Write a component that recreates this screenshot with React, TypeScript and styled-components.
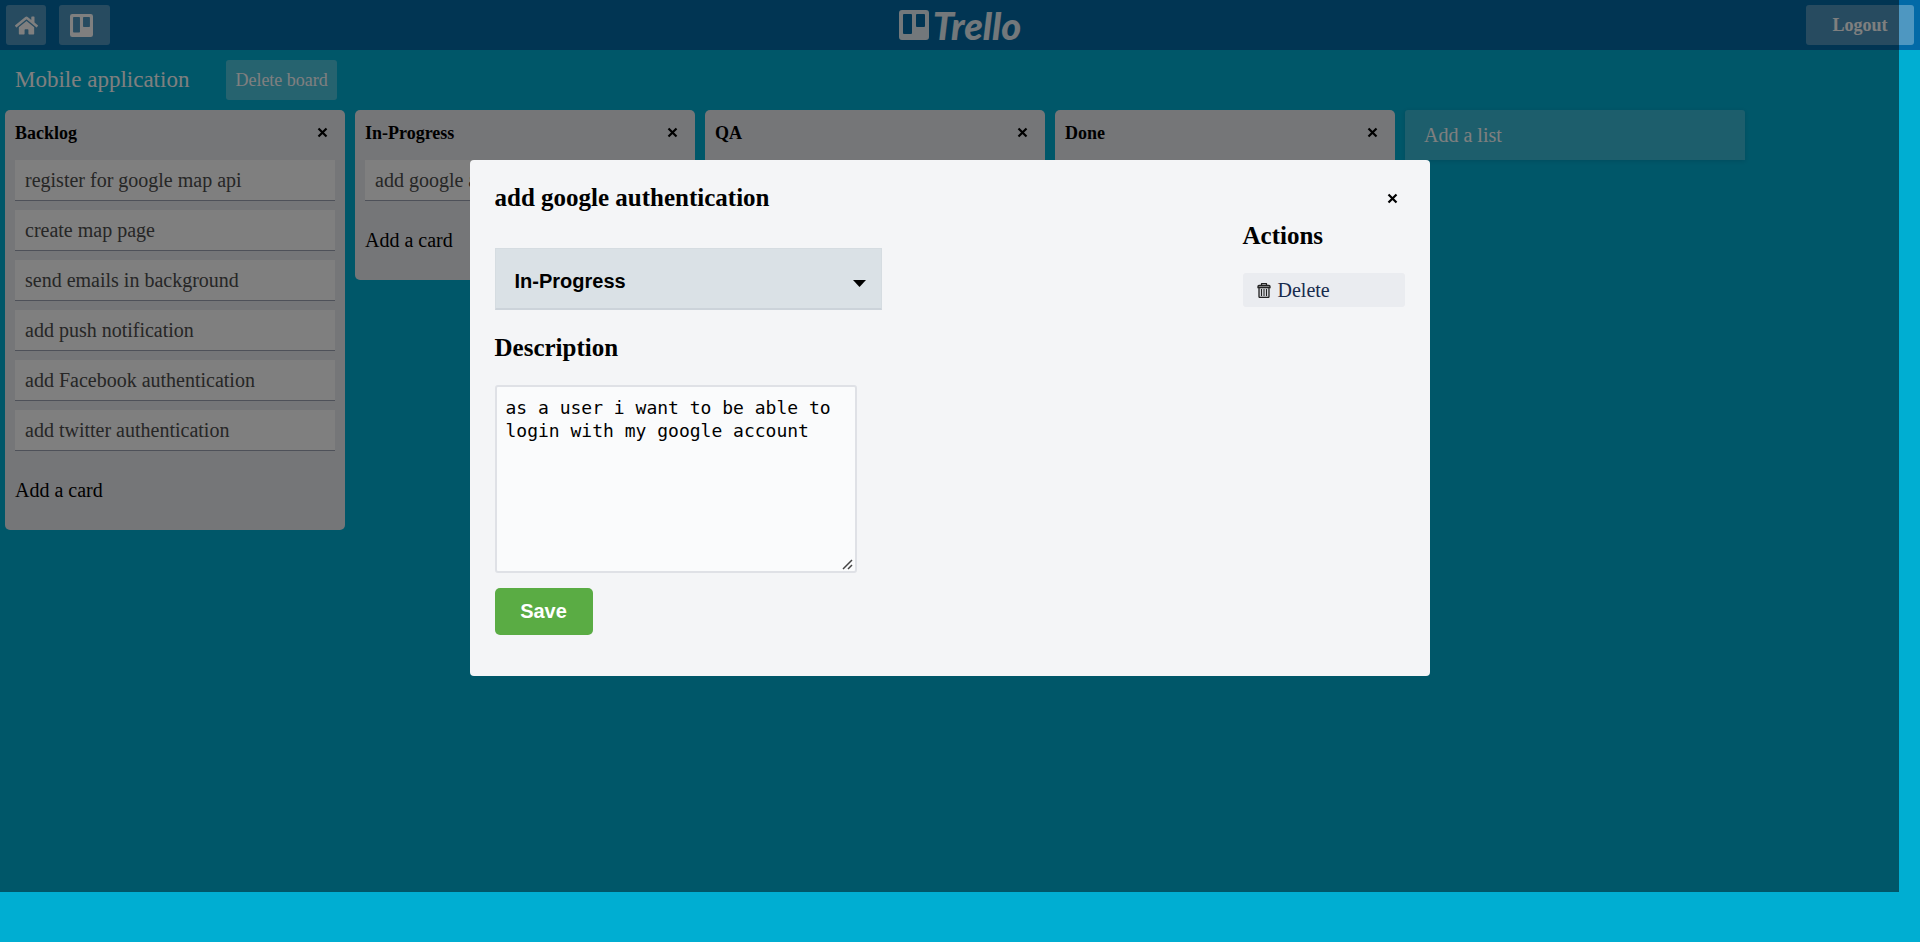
import React from "react";
import styled, { createGlobalStyle } from "styled-components";
import { FaHome } from "react-icons/fa";

const serif = '"Liberation Serif", "Times New Roman", serif';
const sans = '"Liberation Sans", Arial, sans-serif';

const GlobalStyle = createGlobalStyle`
  *, *::before, *::after { box-sizing: border-box; }
  body {
    margin: 0;
    background: #00aed2;
    font-family: ${serif};
    font-size: 20px;
    line-height: 24px;
  }
  button, select, textarea { font: inherit; margin: 0; }
  h1, h2 { margin: 0; }
`;

const Header = styled.header`
  display: grid;
  grid-template-columns: 1fr auto 1fr;
  align-items: center;
  height: 50px;
  padding: 0 6px;
  background: #026aa7;
`;

const NavGroup = styled.nav`
  display: flex;
  gap: 13px;
`;

const HeaderButton = styled.button<{ $width: number }>`
  display: flex;
  align-items: center;
  justify-content: center;
  width: ${(p) => p.$width}px;
  height: 40px;
  padding: 0;
  border: 0;
  border-radius: 3px;
  background: rgba(255, 255, 255, 0.3);
  color: #fff;
  font-size: 18px;
  font-weight: 700;
`;

const BoardsButton = styled(HeaderButton)`
  justify-content: flex-start;
  padding-left: 11px;
`;

const LogoutButton = styled(HeaderButton)`
  justify-self: end;
`;

const Logo = styled.a`
  display: flex;
  align-items: center;
  gap: 4px;
  color: #fff;
  opacity: 0.9;
  text-decoration: none;
  font: italic 900 38px/40px Lato, ${sans};
`;

const BoardBar = styled.div`
  display: flex;
  align-items: center;
  gap: 37px;
  height: 60px;
  padding: 0 15px;
  color: #fff;
`;

const BoardName = styled.h1`
  font-size: 23px;
  font-weight: 400;
`;

const DeleteBoard = styled.button`
  height: 40px;
  padding: 0 9px;
  border: 0;
  border-radius: 3px;
  background: rgba(255, 255, 255, 0.3);
  color: #fff;
  font-size: 18px;
`;

const Lists = styled.main`
  display: flex;
  align-items: flex-start;
  gap: 10px;
  padding: 0 5px;
`;

const List = styled.section`
  flex: 0 0 340px;
  padding: 0 10px 28px;
  border-radius: 5px;
  background: #ebecf0;
`;

const ListHeader = styled.header`
  display: flex;
  align-items: center;
  justify-content: space-between;
  height: 50px;
  padding: 0 7px 5px 0;
`;

const ListName = styled.h2`
  font-size: 18px;
`;

const CloseButton = styled.button`
  display: flex;
  padding: 0;
  border: 0;
  background: none;
  color: #000;
`;

const Cards = styled.ul`
  display: flex;
  flex-direction: column;
  gap: 10px;
  margin: 0;
  padding: 0;
  list-style: none;
`;

const Card = styled.li`
  height: 40px;
  padding: 8px 10px;
  background: #fff;
  box-shadow: 0 1px 0 rgba(9, 30, 66, 0.35);
  color: #4d4d4d;
`;

const AddCard = styled.button`
  display: block;
  margin-top: 28px;
  padding: 0;
  border: 0;
  background: none;
  color: #000;
`;

const AddList = styled.button`
  flex: 0 0 340px;
  height: 50px;
  padding: 0 19px;
  border: 0;
  border-radius: 3px 3px 0 0;
  background: rgba(235, 236, 240, 0.25);
  box-shadow: 0 1px 4px rgba(9, 30, 66, 0.15);
  color: #fff;
  text-align: left;
`;

const Overlay = styled.div`
  position: fixed;
  inset: 0 21px 50px 0;
  display: flex;
  justify-content: center;
  align-items: flex-start;
  padding-top: 160px;
  background: rgba(0, 0, 0, 0.5);
`;

const Dialog = styled.div`
  width: 960px;
  max-width: 100%;
  padding: 24px 25px 41px;
  border-radius: 4px;
  background: #f4f5f7;
`;

const DialogHeader = styled.header`
  display: flex;
  align-items: center;
  justify-content: space-between;
  padding-right: 7px;
`;

const Heading = styled.h2`
  font-size: 25px;
  line-height: 28px;
`;

const DialogBody = styled.div`
  display: flex;
  justify-content: space-between;
  align-items: flex-start;
`;

const Form = styled.form`
  display: flex;
  flex-direction: column;
  align-items: flex-start;
  padding-top: 36px;
`;

const SelectWrap = styled.div`
  display: grid;
  align-items: center;
  width: 387px;
  margin-bottom: 24px;

  > * { grid-area: 1 / 1; }
  > svg { justify-self: end; margin: 8px 16px 0 0; pointer-events: none; }
`;

const StatusSelect = styled.select`
  appearance: none;
  width: 100%;
  height: 62px;
  padding: 4px 19px 0;
  border: 1px solid #d5dce1;
  border-bottom: 2px solid #ccd3da;
  border-radius: 0;
  background: #dae1e6;
  color: #000;
  font: 700 20px/24px ${sans};
`;

const DescriptionWrap = styled.div`
  display: grid;
  margin: 23px 0 15px;

  > * { grid-area: 1 / 1; }
  > svg { place-self: end; margin: 0 4px 3px 0; pointer-events: none; }
`;

const Description = styled.textarea`
  width: 362px;
  height: 188px;
  padding: 9px;
  border: 2px solid #dfe1e6;
  border-radius: 3px;
  background: #fafbfc;
  color: #000;
  font: 18px/23px "DejaVu Sans Mono", monospace;
  resize: none;
`;

const SaveButton = styled.button`
  width: 98px;
  height: 47px;
  padding: 0 0 2px;
  border: 0;
  border-radius: 5px;
  background: #5aac44;
  color: #fff;
  font: 700 20px/24px ${sans};
`;

const Actions = styled.aside`
  width: 162px;
  padding-top: 10px;
`;

const DeleteButton = styled.button`
  display: flex;
  align-items: center;
  gap: 7px;
  width: 100%;
  height: 34px;
  margin-top: 23px;
  padding: 0 14px;
  border: 0;
  border-radius: 3px;
  background: rgba(9, 30, 66, 0.04);
  color: #172b4d;
`;

const BoardMark = ({ size }: { size: number }) => (
  <svg width={size} height={size} viewBox="0 0 30 30" aria-hidden="true">
    <path
      fill="currentColor"
      fillRule="evenodd"
      d="M3 0h24a3 3 0 0 1 3 3v24a3 3 0 0 1-3 3H3a3 3 0 0 1-3-3V3a3 3 0 0 1 3-3ZM5 4A1 1 0 0 0 4 5v18A1 1 0 0 0 5 24h7a1 1 0 0 0 1-1V5A1 1 0 0 0 12 4ZM18 4a1 1 0 0 0-1 1v11A1 1 0 0 0 18 17h7a1 1 0 0 0 1-1V5A1 1 0 0 0 25 4Z"
    />
  </svg>
);

const Cross = () => (
  <svg width="11" height="11" viewBox="0 0 11 11" aria-hidden="true">
    <path d="M1.500 1.500l8 8M9.500 1.500l-8 8" stroke="currentColor" strokeWidth="2.200" />
  </svg>
);

const Caret = () => (
  <svg width="13" height="7" viewBox="0 0 13 7" aria-hidden="true">
    <path d="M0 0h13L6.500 7z" />
  </svg>
);

const Grip = () => (
  <svg width="11" height="11" viewBox="0 0 11 11" aria-hidden="true">
    <path d="M1 10l9-9M6 10l4-4" stroke="#444" strokeWidth="1.500" />
  </svg>
);

const Bin = () => (
  <svg width="14" height="15" viewBox="0 0 14 15" fill="none" stroke="#222" aria-hidden="true">
    <path d="M4.500 2.500v-1.500q0-.5.5-.5h4q.5 0 .5.500v1.500" strokeWidth="1.300" />
    <path
      d="M2 4.500v9q0 1 1 1h8q1 0 1-1v-9M1 4.500v-1q0-1 1-1h10q1 0 1 1v1z"
      fill="#d0d2d6"
      strokeWidth="1.300"
    />
    <path d="M4.500 6v7M7 6v7M9.500 6v7" />
  </svg>
);

const lists = [
  {
    name: "Backlog",
    cards: [
      "register for google map api",
      "create map page",
      "send emails in background",
      "add push notification",
      "add Facebook authentication",
      "add twitter authentication",
    ],
  },
  { name: "In-Progress", cards: ["add google authentication"] },
  { name: "QA", cards: [] },
  { name: "Done", cards: [] },
];

export default function App() {
  return (
    <>
      <GlobalStyle />
      <Header>
        <NavGroup>
          <HeaderButton $width={40} aria-label="Home">
            <FaHome size={23} />
          </HeaderButton>
          <BoardsButton $width={51} aria-label="Boards">
            <BoardMark size={23} />
          </BoardsButton>
        </NavGroup>
        <Logo href="#">
          <BoardMark size={30} />
          Trello
        </Logo>
        <LogoutButton $width={108}>Logout</LogoutButton>
      </Header>
      <BoardBar>
        <BoardName>Mobile application</BoardName>
        <DeleteBoard>Delete board</DeleteBoard>
      </BoardBar>
      <Lists>
        {lists.map((list) => (
          <List key={list.name}>
            <ListHeader>
              <ListName>{list.name}</ListName>
              <CloseButton aria-label={`Delete ${list.name}`}>
                <Cross />
              </CloseButton>
            </ListHeader>
            <Cards>
              {list.cards.map((card) => (
                <Card key={card}>{card}</Card>
              ))}
            </Cards>
            <AddCard>Add a card</AddCard>
          </List>
        ))}
        <AddList>Add a list</AddList>
      </Lists>
      <Overlay>
        <Dialog role="dialog" aria-modal="true" aria-labelledby="card-title">
          <DialogHeader>
            <Heading id="card-title">add google authentication</Heading>
            <CloseButton aria-label="Close">
              <Cross />
            </CloseButton>
          </DialogHeader>
          <DialogBody>
            <Form onSubmit={(e) => e.preventDefault()}>
              <SelectWrap>
                <StatusSelect aria-label="List" defaultValue="In-Progress">
                  {lists.map((list) => (
                    <option key={list.name}>{list.name}</option>
                  ))}
                </StatusSelect>
                <Caret />
              </SelectWrap>
              <Heading>
                <label htmlFor="description">Description</label>
              </Heading>
              <DescriptionWrap>
                <Description
                  id="description"
                  spellCheck={false}
                  defaultValue="as a user i want to be able to login with my google account"
                />
                <Grip />
              </DescriptionWrap>
              <SaveButton type="submit">Save</SaveButton>
            </Form>
            <Actions>
              <Heading>Actions</Heading>
              <DeleteButton>
                <Bin />
                Delete
              </DeleteButton>
            </Actions>
          </DialogBody>
        </Dialog>
      </Overlay>
    </>
  );
}
